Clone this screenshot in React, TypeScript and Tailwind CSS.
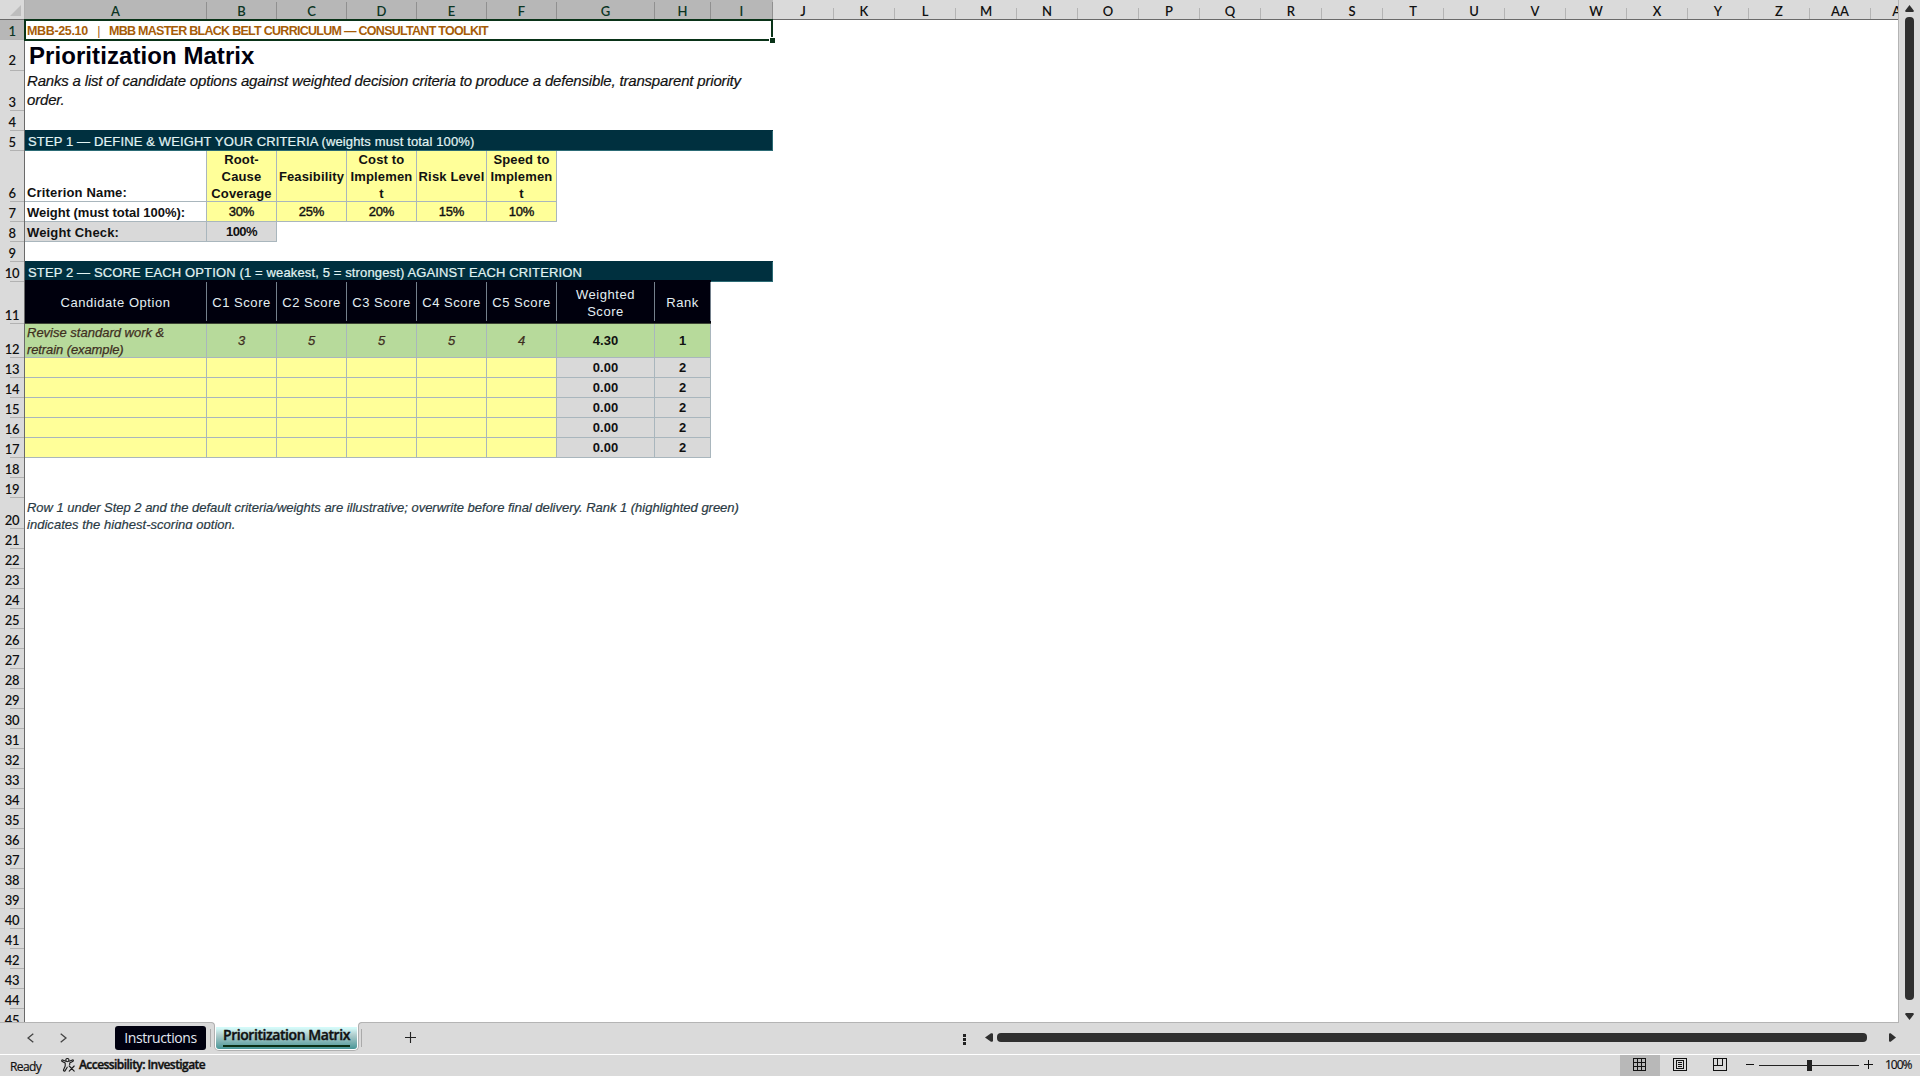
import React from 'react';

const ARIAL = 'font-["Liberation_Sans",Arial,sans-serif]';
const UI = 'font-["Open_Sans","Noto_Sans",sans-serif]';

type Col = { id: string; w: string; selected?: boolean };

const W61 = 'w-[61px]';
const columns: Col[] = [
  { id: 'A', w: 'w-[182px]', selected: true },
  { id: 'B', w: 'w-[70px]', selected: true },
  { id: 'C', w: 'w-[70px]', selected: true },
  { id: 'D', w: 'w-[70px]', selected: true },
  { id: 'E', w: 'w-[70px]', selected: true },
  { id: 'F', w: 'w-[70px]', selected: true },
  { id: 'G', w: 'w-[98px]', selected: true },
  { id: 'H', w: 'w-[56px]', selected: true },
  { id: 'I', w: 'w-[62px]', selected: true },
  ...['J', 'K', 'L', 'M', 'N', 'O', 'P', 'Q', 'R', 'S', 'T', 'U', 'V', 'W', 'X', 'Y', 'Z', 'AA', 'AB'].map((id) => ({ id, w: W61 })),
];

function ColumnHeaders() {
  return (
    <div className="flex h-5 shrink-0 border-b border-[#6a6a6a] bg-[#dadada]">
      <div className="flex w-[25px] shrink-0 items-end justify-end border-r border-[#b0b0b0] pr-[3px] pb-[3px]">
        <svg className="h-[11px] w-[11px]" viewBox="0 0 11 11">
          <path d="M11 0V11H0Z" fill="#bdbdbd" />
        </svg>
      </div>
      {columns.map((c) => (
        <div key={c.id} className={`${c.w} flex shrink-0 items-end ${c.selected ? 'bg-[#b7b7b7] text-[#0c3524]' : 'text-[#111]'}`}>
          <span className='flex-1 text-center font-["Lato","Open_Sans",sans-serif] text-[13px] leading-[16px] font-semibold'>{c.id}</span>
          <i className={c.selected ? 'h-[17px] w-px bg-[#909090]' : 'h-[11px] w-px bg-[#b4b4b4]'} />
        </div>
      ))}
    </div>
  );
}

function Row({ n, h = 'h-5', children }: { n: number; h?: string; children?: React.ReactNode }) {
  return (
    <div className={`flex shrink-0 ${h}`}>
      <div className={`flex w-[25px] shrink-0 flex-col items-end justify-end border-r border-[#6a6a6a] ${n === 1 ? 'bg-[#b7b7b7] text-[#0c3524]' : 'bg-[#dadada] text-[#111]'}`}>
        <span className={`w-full text-center font-["Lato","Open_Sans",sans-serif] text-[13px] leading-4 font-semibold tracking-[-0.4px] ${n === 2 ? 'pb-0.5' : ''}`}>{n}</span>
        <i className="h-px w-[14px] shrink-0 bg-[#b2b2b2]" />
      </div>
      {children}
    </div>
  );
}

const edge = 'border-r border-b border-[#a9b6bd]';
const text = `${ARIAL} text-[13px] leading-[17px]`;

function Band({ children }: { children: React.ReactNode }) {
  return (
    <div className={`${text} flex w-[748px] items-end border-r border-b border-[#2c6b75] bg-[#00303f] pl-[3px] tracking-[0.135px] text-[#e2f4f4] shadow-[0_-1px_0_#00303f] [-webkit-text-stroke:0.2px_#e2f4f4]`}>
      {children}
    </div>
  );
}

function Criterion({ lines }: { lines: string[] }) {
  return (
    <div className={`${text} ${edge} flex w-[70px] flex-col items-center justify-center bg-[#ffff99] font-bold tracking-[0.15px] whitespace-nowrap text-[#111]`}>
      {lines.map((l) => <span key={l}>{l}</span>)}
    </div>
  );
}

function HeadCell({ w, lines }: { w: string; lines: string[] }) {
  return (
    <div className={`${w} flex shrink-0 border-b border-[#3c4434] bg-[#00000d] shadow-[0_-2px_0_#00000d]`}>
      <div className={`${text} flex flex-1 flex-col items-center justify-center tracking-[0.55px] whitespace-nowrap text-[#e4eff3]`}>
        {lines.map((l) => <span key={l}>{l}</span>)}
      </div>
      <i className="mb-0.5 w-px bg-[#74808c]" />
    </div>
  );
}

function OptionRow({ n }: { n: number }) {
  return (
    <Row n={n}>
      <div className={`${edge} w-[182px] bg-[#ffff99]`} />
      {[1, 2, 3, 4, 5].map((k) => <div key={k} className={`${edge} w-[70px] bg-[#ffff99]`} />)}
      <div className={`${text} ${edge} flex w-[98px] items-center justify-center bg-[#d9d9d9] font-bold text-[#111]`}>0.00</div>
      <div className={`${text} ${edge} flex w-[56px] items-center justify-center bg-[#d9d9d9] font-bold text-[#111]`}>2</div>
    </Row>
  );
}

function Sheet() {
  return (
    <div className="flex h-[1023px] w-[1899px] flex-col overflow-hidden border-r border-b border-[#b4b4b4] bg-white">
      <ColumnHeaders />
      <Row n={1}>
        <div className={`${ARIAL} relative z-10 -mt-px -mb-px -ml-px flex w-[749px] border-2 border-[#0a3318] pt-[3px] pl-px text-[12.5px] leading-[14px] font-bold text-[#a65c08]`}>
          <span className="w-[82px] tracking-[-0.35px] whitespace-pre">MBB-25.10   <span className="font-normal">|</span></span>
          <span className="tracking-[-0.72px]">MBB MASTER BLACK BELT CURRICULUM — CONSULTANT TOOLKIT</span>
          <i className="absolute -right-1 -bottom-1 size-[6px] border-t border-l border-white bg-[#0a3318]" />
        </div>
      </Row>
      <Row n={2} h="h-[31px]">
        <div className={`${ARIAL} pt-px pl-1 text-[24px] leading-[30px] font-bold tracking-[0.07px] text-[#00000d]`}>Prioritization Matrix</div>
      </Row>
      <Row n={3} h="h-10">
        <div className={`${ARIAL} pl-0.5 text-[15px] leading-[19px] tracking-[-0.182px] whitespace-nowrap text-[#111] italic [-webkit-text-stroke:0.2px_#111]`}>
          Ranks a list of candidate options against weighted decision criteria to produce a defensible, transparent priority<br />order.
        </div>
      </Row>
      <Row n={4} />
      <Row n={5}><Band>STEP 1 — DEFINE &amp; WEIGHT YOUR CRITERIA (weights must total 100%)</Band></Row>
      <Row n={6} h="h-[51px]">
        <div className={`${text} ${edge} flex w-[182px] items-end pl-0.5 font-bold tracking-[0.165px] text-[#111]`}>Criterion Name:</div>
        <Criterion lines={['Root-', 'Cause', 'Coverage']} />
        <Criterion lines={['Feasibility']} />
        <Criterion lines={['Cost to', 'Implemen', 't']} />
        <Criterion lines={['Risk Level']} />
        <Criterion lines={['Speed to', 'Implemen', 't']} />
      </Row>
      <Row n={7}>
        <div className={`${text} ${edge} flex w-[182px] items-end pl-0.5 font-bold tracking-[-0.02px] text-[#111]`}>Weight (must total 100%):</div>
        {['30%', '25%', '20%', '15%', '10%'].map((v) => (
          <div key={v} className={`${text} ${edge} flex w-[70px] items-center justify-center bg-[#ffff99] tracking-[-0.15px] text-[#111] [-webkit-text-stroke:0.4px_#111]`}>{v}</div>
        ))}
      </Row>
      <Row n={8}>
        <div className={`${text} ${edge} flex w-[182px] items-end bg-[#d9d9d9] pl-0.5 font-bold tracking-[0.15px] text-[#111]`}>Weight Check:</div>
        <div className={`${text} ${edge} flex w-[70px] items-center justify-center bg-[#d9d9d9] font-bold tracking-[-0.6px] text-[#111]`}>100%</div>
      </Row>
      <Row n={9} />
      <Row n={10}><Band>STEP 2 — SCORE EACH OPTION (1 = weakest, 5 = strongest) AGAINST EACH CRITERION</Band></Row>
      <Row n={11} h="h-[42px]">
        <HeadCell w="w-[182px]" lines={['Candidate Option']} />
        {[1, 2, 3, 4, 5].map((k) => <HeadCell key={k} w="w-[70px]" lines={[`C${k} Score`]} />)}
        <HeadCell w="w-[98px]" lines={['Weighted', 'Score']} />
        <HeadCell w="w-[56px]" lines={['Rank']} />
      </Row>
      <Row n={12} h="h-[34px]">
        <div className={`${text} ${edge} w-[182px] bg-[#b7da9b] pl-0.5 text-[#3f2f1f] italic [-webkit-text-stroke:0.25px_#3f2f1f]`}>
          Revise standard work &amp;<br /><span className="tracking-[-0.1px]">retrain (example)</span>
        </div>
        {[3, 5, 5, 5, 4].map((v, k) => (
          <div key={k} className={`${text} ${edge} flex w-[70px] items-center justify-center bg-[#b7da9b] text-[#3f2f1f] italic [-webkit-text-stroke:0.25px_#3f2f1f]`}>{v}</div>
        ))}
        <div className={`${text} ${edge} flex w-[98px] items-center justify-center bg-[#b7da9b] font-bold text-[#111]`}>4.30</div>
        <div className={`${text} ${edge} flex w-[56px] items-center justify-center bg-[#b7da9b] font-bold text-[#111]`}>1</div>
      </Row>
      {[13, 14, 15, 16, 17].map((n) => <OptionRow key={n} n={n} />)}
      <Row n={18} />
      <Row n={19} />
      <Row n={20} h="h-[31px]">
        <div className={`${text} overflow-hidden pt-px pl-0.5 tracking-[-0.02px] whitespace-nowrap text-[#2a3a44] italic [-webkit-text-stroke:0.2px_#2a3a44]`}>
          Row 1 under Step 2 and the default criteria/weights are illustrative; overwrite before final delivery. Rank 1 (highlighted green)<br />
          <span className="tracking-[0.03px]">indicates the highest-scoring option.</span>
        </div>
      </Row>
      {Array.from({ length: 25 }, (_, i) => <Row key={i} n={21 + i} />)}
    </div>
  );
}

function VerticalScroll() {
  return (
    <div className="flex flex-1 flex-col items-center pt-[5px]">
      <svg className="h-[7px] w-[9px] shrink-0" viewBox="0 0 9 7"><path d="M4.5 0 8.7 5.4Q9 7 8 7H1Q0 7 .3 5.4Z" fill="#2f2f2f" /></svg>
      <div className="mt-[5px] h-[983px] w-[9px] shrink-0 rounded-[4px] bg-[#2f2f2f]" />
      <svg className="mt-[13px] h-[7px] w-[9px] shrink-0" viewBox="0 0 9 7"><path d="M4.5 7 8.7 1.6Q9 0 8 0H1Q0 0 .3 1.6Z" fill="#2f2f2f" /></svg>
    </div>
  );
}

function TabBar() {
  return (
    <div className={`${UI} flex h-[31px] shrink-0 items-start text-[#111]`}>
      <svg className="mt-[10px] ml-[27px] h-[10px] w-[7px]" viewBox="0 0 7 10" fill="none" stroke="#444" strokeWidth="1.3"><path d="M6.3.7 1 5l5.3 4.3" /></svg>
      <svg className="mt-[10px] ml-[26px] h-[10px] w-[7px]" viewBox="0 0 7 10" fill="none" stroke="#444" strokeWidth="1.3"><path d="M.7.7 6 5 .7 9.3" /></svg>
      <div className="mt-[3px] ml-[48px] flex h-6 w-[91px] items-center justify-center rounded-[3px] bg-[#00000f] text-[14px] leading-6 tracking-[-0.42px] text-[#e2e8f2]">Instructions</div>
      <i className="mt-1.5 ml-1 h-[18px] w-px bg-[#aaa]" />
      <div className="relative -mt-px ml-[3px] flex h-[29px] w-[145px] flex-col rounded-b-[5px] border-x border-b border-[#b0b0b0] bg-white px-px pt-[5px] pb-px">
        <div className="absolute top-0 -left-1 size-1 bg-white"><i className="block size-1 rounded-tr-[4px] border-t border-r border-[#b0b0b0] bg-[#dadada]" /></div>
        <div className="absolute top-0 -right-1 size-1 bg-white"><i className="block size-1 rounded-tl-[4px] border-t border-l border-[#b0b0b0] bg-[#dadada]" /></div>
        <div className="flex flex-1 flex-col items-center rounded-b-[3px] bg-linear-to-b from-[#d4faf9] from-5% via-[#b2cfcf] via-35% to-[#479697]">
          <span className="-mt-[2px] text-[14px] leading-[20px] font-semibold tracking-[-0.43px] whitespace-nowrap [-webkit-text-stroke:0.4px_#111]">Prioritization Matrix</span>
          <i className="h-0.5 w-[127px] bg-[#0a2f14]" />
        </div>
      </div>
      <i className="mt-1.5 ml-[2px] h-[18px] w-px bg-[#aaa]" />
      <svg className="mt-[9px] ml-[43px] h-[11px] w-[11px]" viewBox="0 0 11 11" stroke="#222" strokeWidth="1.1"><path d="M5.5 0V11M0 5.5H11" /></svg>
      <div className="mt-[11px] ml-[547px] flex flex-col gap-px">
        <i className="h-[3px] w-[3px] bg-[#222]" /><i className="h-[3px] w-[3px] bg-[#222]" /><i className="h-[3px] w-[3px] bg-[#222]" />
      </div>
      <svg className="mt-[10px] ml-[19px] h-[9px] w-[8px]" viewBox="0 0 8 9"><path d="M0 4.5 6 .3Q8 0 8 1V8Q8 9 6 8.7Z" fill="#2f2f2f" /></svg>
      <div className="mt-[10px] ml-1 h-[9px] w-[870px] rounded-[4px] bg-[#2f2f2f]" />
      <svg className="mt-[10px] ml-[22px] h-[9px] w-[7px]" viewBox="0 0 7 9"><path d="M7 4.5 1.6 8.7Q0 9 0 8V1Q0 0 1.6.3Z" fill="#2f2f2f" /></svg>
    </div>
  );
}

function StatusBar() {
  return (
    <div className={`${UI} flex h-[22px] shrink-0 border-t border-white text-[#111]`}>
      <span className="ml-[10px] w-[51px] pt-[3px] text-[12px] leading-[17px] tracking-[-0.6px] [-webkit-text-stroke:0.2px_#111]">Ready</span>
      <svg className="mt-[3px] h-[14px] w-[14px]" viewBox="0 0 14 14" fill="none" stroke="#1a1a1a" strokeWidth="1.1" strokeLinecap="round" strokeLinejoin="round">
        <circle cx="6.4" cy="2.1" r="1.6" />
        <path d="M4.9 3.3 1.6 1.9Q.4 2 .8 3.2L4.2 5.1V8L2.4 12.2Q2.6 13.6 4 12.9L6.2 9.2M8 3.3 11.6 1.9Q12.9 2.2 12.1 3.3L8.7 5.1V6.8" />
        <path d="M8.2 8 13.2 13.2M13.2 8 8.2 13.2" />
      </svg>
      <span className="ml-1 w-[1541px] pt-px text-[12px] leading-[17px] font-semibold tracking-[-0.56px] [-webkit-text-stroke:0.4px_#111]">Accessibility: Investigate</span>
      <div className="flex w-10 justify-center bg-[#b8b8b8] pt-[3px] pr-px">
        <svg className="h-[13px] w-[13px]" viewBox="0 0 13 13" fill="none" stroke="#111" shapeRendering="crispEdges"><path d="M.5.5h12v12H.5zM4.5 0v13M8.5 0v13M0 4.5h13M0 8.5h13" /></svg>
      </div>
      <svg className="mt-[3px] ml-[13px] h-[13px] w-[14px]" viewBox="0 0 14 13" fill="none" stroke="#111" shapeRendering="crispEdges"><path d="M.5.5h13v12H.5zM3.5 2.5h7v8h-7zM5 4.5h4M5 6.5h4M5 8.5h4" /></svg>
      <svg className="mt-[3px] ml-[26px] h-[13px] w-[14px]" viewBox="0 0 14 13" fill="none" stroke="#111" shapeRendering="crispEdges"><path d="M.5.5h13v12H.5zM4.5 0v8M9.5 0v8M0 7.5h10" /></svg>
      <i className="mt-[9px] ml-[19px] h-px w-2 bg-[#111]" />
      <div className="ml-[5px] flex h-[21px] w-[100px] items-center justify-center bg-[linear-gradient(#222,#222)] bg-[length:100%_1px] bg-[position:0_10px] bg-no-repeat">
        <i className="h-[11px] w-[5px] bg-[#222]" />
      </div>
      <svg className="mt-[5px] ml-[5px] h-[9px] w-[9px]" viewBox="0 0 9 9" stroke="#111" shapeRendering="crispEdges"><path d="M4.5 0V9M0 4.5H9" /></svg>
      <span className="ml-[12px] pt-px text-[12px] leading-[17px] tracking-[-1px] [-webkit-text-stroke:0.2px_#111]">100%</span>
    </div>
  );
}

export default function App() {
  return (
    <div className="flex h-[1076px] w-[1920px] flex-col overflow-hidden bg-[#dadada]">
      <div className="flex h-[1023px] shrink-0">
        <Sheet />
        <VerticalScroll />
      </div>
      <TabBar />
      <StatusBar />
    </div>
  );
}
